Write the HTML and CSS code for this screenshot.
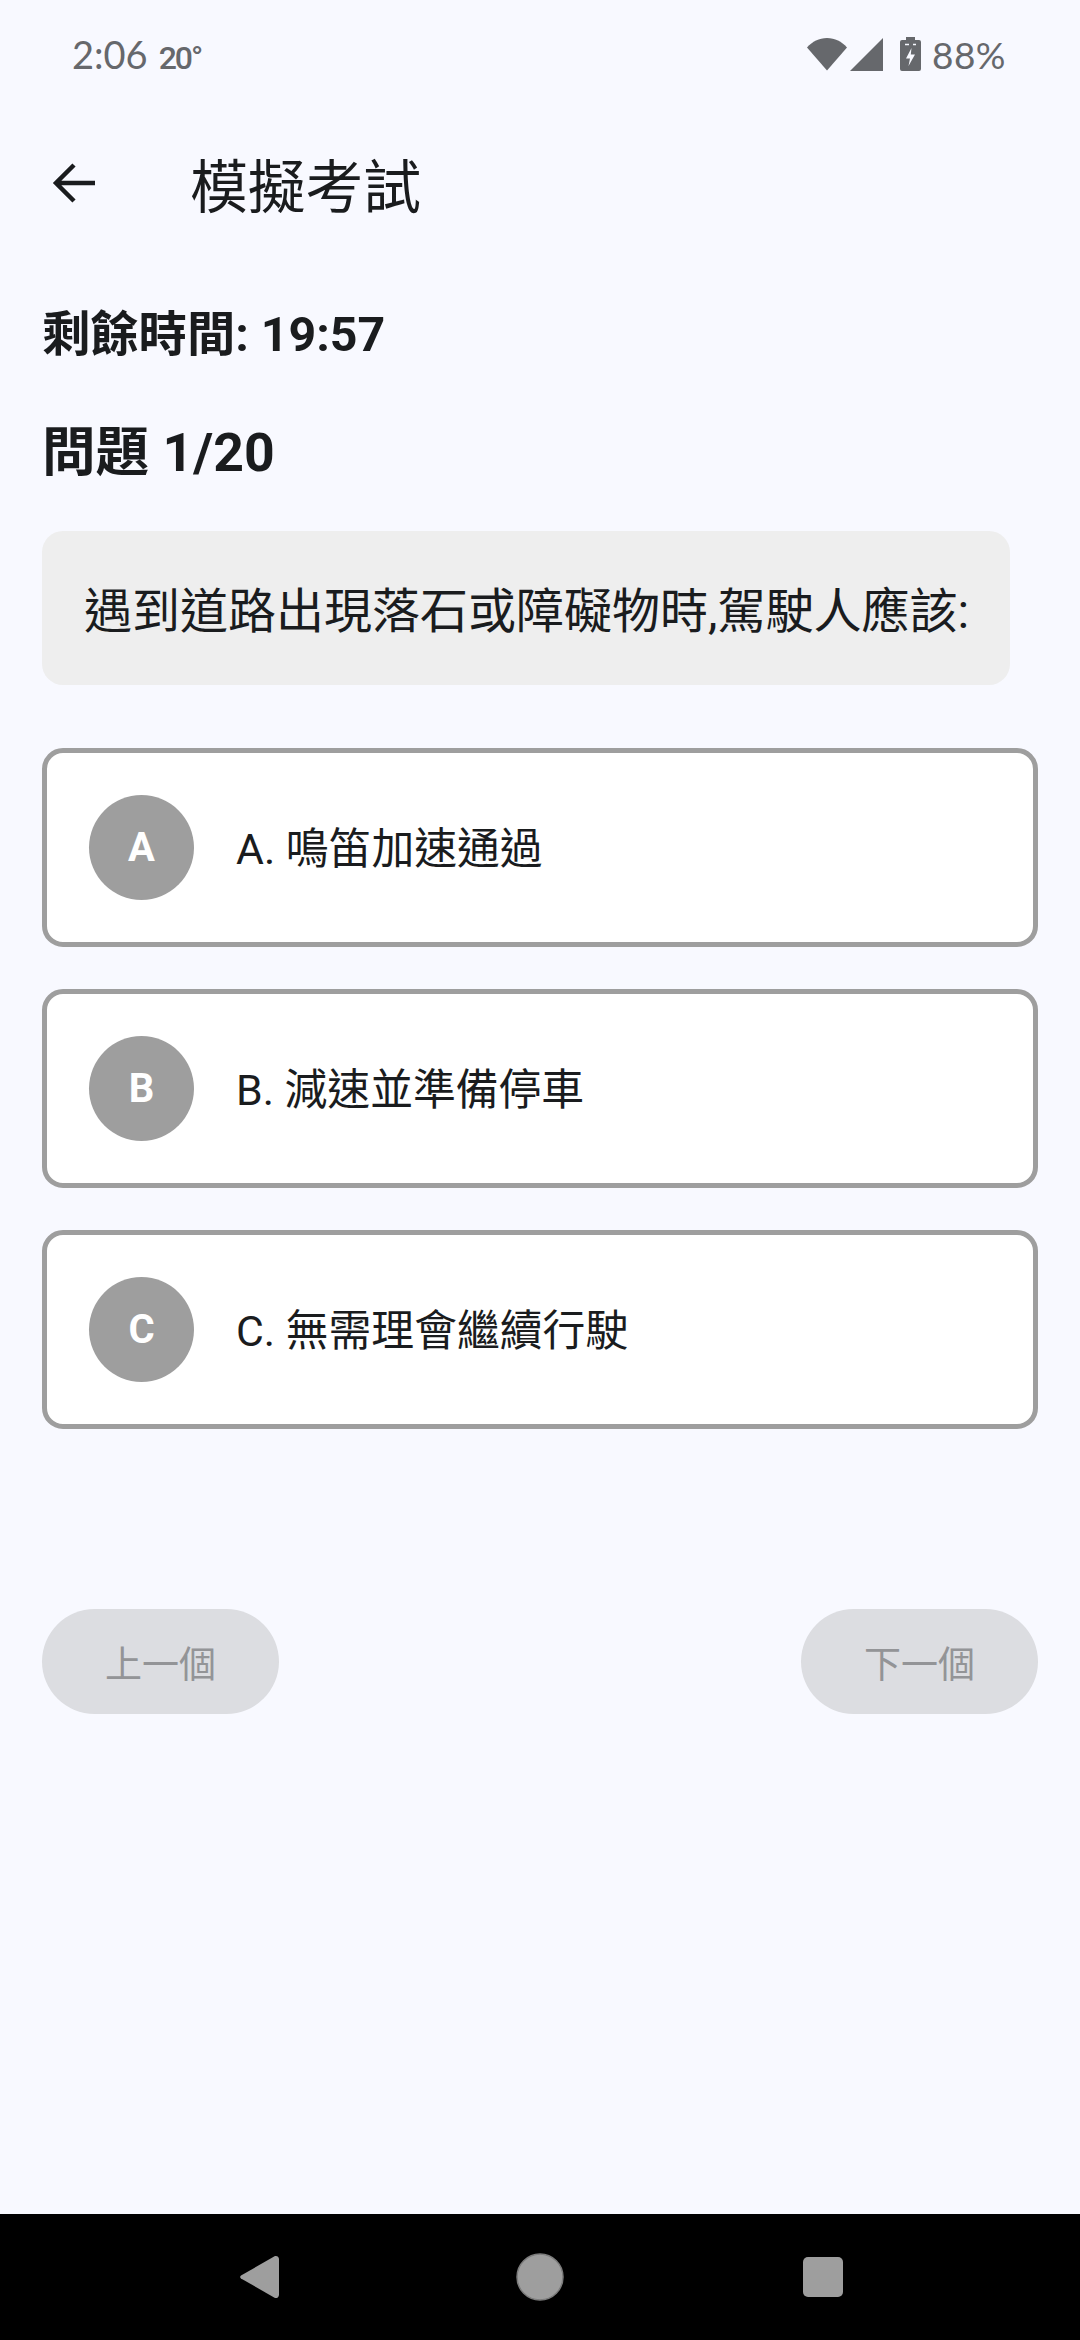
FILE: index.html
```html
<!DOCTYPE html>
<html lang="zh-Hant">
<head>
<meta charset="utf-8">
<title>模擬考試</title>
<link rel="stylesheet" href="styles.css">
</head>
<body>
<div class="screen">
  <div class="status">
    <div class="status-left"><span class="clock">2:06</span><span class="temp">20°</span></div>
    <div class="status-right">
      <svg class="wifi" width="40" height="34" viewBox="0 0 40 34"><path d="M0 10.500C5.500 4.500 12 1 20 1s14.500 3.500 20 9.500L20 33.500z" fill="#66686c"/></svg>
      <svg class="signal" width="33" height="33" viewBox="0 0 33 33"><path d="M33 0v33H0z" fill="#66686c"/></svg>
      <svg class="battery" width="21" height="34" viewBox="0 0 21 34"><path d="M6 0h9v3h4a2 2 0 0 1 2 2v27a2 2 0 0 1-2 2H2a2 2 0 0 1-2-2V5a2 2 0 0 1 2-2h4z" fill="#66686c"/><path d="M11.500 11 6 21.500h4L8.500 29l6.500-11.500h-4.200z" fill="#f8f9ff"/><path d="M5 7.500h4M13 7.500h3" stroke="#f8f9ff" stroke-width="1.500"/></svg>
      <span class="pct">88%</span>
    </div>
  </div>
  <header class="appbar">
    <svg class="back" width="44" height="44" viewBox="0 0 44 44"><path d="M44 22H5M23 4 5 22l18 18" fill="none" stroke="#1a1c1e" stroke-width="4.500"/></svg>
    <h1 class="title">模擬考試</h1>
  </header>
  <main class="content">
    <div class="timer">剩餘時間: 19:57</div>
    <div class="counter">問題 1/20</div>
    <div class="question">遇到道路出現落石或障礙物時,駕駛人應該:</div>
    <div class="options">
      <div class="option"><span class="badge">A</span><span class="option-text">A. 鳴笛加速通過</span></div>
      <div class="option"><span class="badge">B</span><span class="option-text">B. 減速並準備停車</span></div>
      <div class="option"><span class="badge">C</span><span class="option-text">C. 無需理會繼續行駛</span></div>
    </div>
    <div class="actions">
      <button class="btn">上一個</button>
      <button class="btn">下一個</button>
    </div>
  </main>
  <nav class="navbar">
    <svg width="44" height="48" viewBox="0 0 44 48"><path d="M38 3 4 22.500a2 2 0 0 0 0 3L38 45a3.500 3.500 0 0 0 4-3V6a3.500 3.500 0 0 0-4-3z" fill="#9e9e9e"/></svg>
    <svg width="48" height="48" viewBox="0 0 48 48"><circle cx="24" cy="24" r="23" fill="#9e9e9e" stroke="#7c7c7c" stroke-width="1.500"/></svg>
    <svg width="40" height="40" viewBox="0 0 40 40"><rect width="40" height="40" rx="5" fill="#9e9e9e"/></svg>
  </nav>
</div>
</body>
</html>
```
FILE: styles.css
```css
* { box-sizing: border-box; margin: 0; padding: 0; }
html, body { width: 1080px; height: 2340px; overflow: hidden; }
body { background: #f8f9ff; color: #1a1c1e; font-family: Roboto, "Noto Sans CJK TC", sans-serif; }
.screen { width: 1080px; height: 2340px; display: flex; flex-direction: column; }
.status { height: 108px; padding: 0 72px; display: flex; justify-content: space-between; align-items: center; color: #66686c; flex: none; }
.status-left { display: flex; align-items: baseline; gap: 11px; }
.clock { font: 400 38px Lato, sans-serif; }
.temp { font: 500 32px Roboto, sans-serif; letter-spacing: -2px; }
.status-right { display: flex; align-items: center; margin-right: 2px; }
.wifi { margin-right: 3px; }
.signal { margin-right: 17px; }
.battery { margin-right: 11px; }
.pct { font: 400 37px Lato, sans-serif; letter-spacing: 0.5px; }
.appbar { height: 156px; display: flex; align-items: center; flex: none; padding-left: 51px; }
.back { margin-right: 95px; margin-top: -6px; }
.title { font-size: 57.750px; font-weight: 400; line-height: 1; margin-top: 6px; }
.content { flex: 1; padding: 0 42px; display: flex; flex-direction: column; }
.timer { font-size: 48.300px; font-weight: 700; line-height: 60px; margin-top: 41px; }
.counter { font-size: 53.600px; font-weight: 700; line-height: 64px; margin-top: 56px; }
.question { width: 968px; height: 154px; margin-top: 46px; padding: 0 42px 3px; background: #eeeeee; border-radius: 21px; display: flex; align-items: center; font-size: 48px; white-space: nowrap; }
.options { display: flex; flex-direction: column; gap: 42px; margin-top: 63px; }
.option { height: 199px; background: #fff; border: 5px solid #9e9e9e; border-radius: 21px; display: flex; align-items: center; padding-left: 42px; gap: 42px; }
.badge { width: 105px; height: 105px; border-radius: 50%; background: #9e9e9e; color: #fff; display: flex; align-items: center; justify-content: center; font-size: 40px; font-weight: 700; flex: none; }
.option-text { font-size: 42.800px; margin-bottom: 6px; }
.actions { display: flex; justify-content: space-between; margin-top: 180px; }
.btn { width: 237px; height: 105px; border: 0; border-radius: 53px; background: #dcdde1; color: #939497; font: 400 37px Roboto, "Noto Sans CJK TC", sans-serif; }
.navbar { height: 126px; background: #000; flex: none; display: flex; align-items: center; justify-content: center; position: relative; }
.navbar svg:nth-child(1) { margin-right: 235px; }
.navbar svg:nth-child(2) { margin-right: 239px; }
```
